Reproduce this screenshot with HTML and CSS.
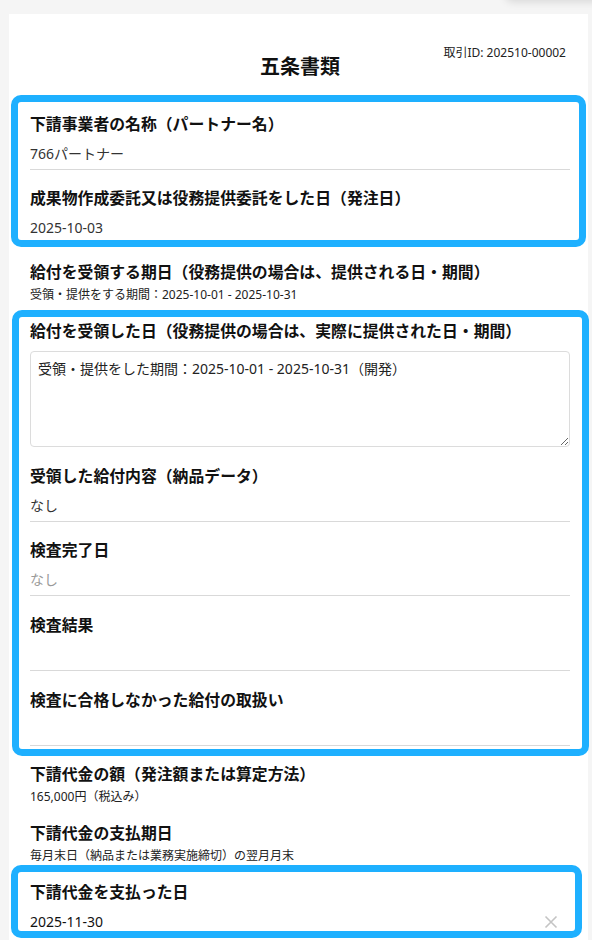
FILE: index.html
```html
<!DOCTYPE html>
<html lang="ja">
<head>
<meta charset="utf-8">
<link rel="stylesheet" href="styles.css">
</head>
<body>
<div class="shadow-blob"></div>
<main class="card">
  <header class="doc-header">
    <h1 class="doc-title">五条書類</h1>
    <div class="doc-id">取引ID: 202510-00002</div>
  </header>

  <section class="group hl hl-1">
    <div class="field">
      <div class="label">下請事業者の名称（パートナー名）</div>
      <div class="input">766パートナー</div>
    </div>
    <div class="field">
      <div class="label">成果物作成委託又は役務提供委託をした日（発注日）</div>
      <div class="input">2025-10-03</div>
    </div>
  </section>

  <section class="info">
    <div class="label">給付を受領する期日（役務提供の場合は、提供される日・期間）</div>
    <div class="sub">受領・提供をする期間：2025-10-01 - 2025-10-31</div>
  </section>

  <section class="group hl hl-2">
    <div class="field">
      <div class="label">給付を受領した日（役務提供の場合は、実際に提供された日・期間）</div>
      <textarea class="textarea" readonly>受領・提供をした期間：2025-10-01 - 2025-10-31（開発）</textarea>
    </div>
    <div class="field">
      <div class="label">受領した給付内容（納品データ）</div>
      <div class="input">なし</div>
    </div>
    <div class="field">
      <div class="label">検査完了日</div>
      <div class="input placeholder">なし</div>
    </div>
    <div class="field">
      <div class="label">検査結果</div>
      <div class="input"></div>
    </div>
    <div class="field">
      <div class="label">検査に合格しなかった給付の取扱い</div>
      <div class="input"></div>
    </div>
  </section>

  <section class="info">
    <div class="label">下請代金の額（発注額または算定方法）</div>
    <div class="sub">165,000円（税込み）</div>
  </section>

  <section class="info">
    <div class="label">下請代金の支払期日</div>
    <div class="sub">毎月末日（納品または業務実施締切）の翌月月末</div>
  </section>

  <section class="group hl hl-3">
    <div class="field">
      <div class="label">下請代金を支払った日</div>
      <div class="input date-input">
        <span>2025-11-30</span>
        <svg class="clear" width="14" height="14" viewBox="0 0 14 14"><path d="M1.5 1.5 L12.5 12.5 M12.5 1.5 L1.5 12.5" stroke="#c4c4c4" stroke-width="1.6" fill="none"/></svg>
      </div>
    </div>
  </section>
</main>
</body>
</html>
```

FILE: styles.css
```css
* { box-sizing: border-box; }
html, body { margin: 0; padding: 0; }
body {
  background: #f5f5f5;
  font-family: "Noto Sans", "Noto Sans CJK JP", sans-serif;
  color: #111;
  height: 940px;
  overflow: hidden;
  position: relative;
}
.shadow-blob {
  position: absolute;
  top: -30px;
  left: 505px;
  width: 120px;
  height: 30px;
  border-radius: 8px;
  background: #f5f5f5;
  box-shadow: 0 2px 8px rgba(0,0,0,0.12);
}
.card {
  background: #fff;
  margin: 14px 4px 0 9px;
  padding: 30px 18px 40px 21px;
  min-height: 1000px;
}
.doc-header {
  display: grid;
  grid-template-columns: 1fr auto 1fr;
  align-items: start;
}
.doc-title {
  grid-column: 2;
  grid-row: 1;
  margin: 9px 0 0;
  font-size: 20px;
  line-height: 28px;
  font-weight: 700;
  color: #111;
}
.doc-id {
  grid-column: 3;
  grid-row: 1;
  justify-self: end;
  font-size: 12px;
  line-height: 18px;
  color: #222;
  margin-right: 4px;
}
.group { position: relative; }
.hl::before {
  content: "";
  position: absolute;
  border: 7px solid #1eb0ff;
  border-radius: 10px;
  pointer-events: none;
  z-index: 2;
}
.hl-1 { margin-top: 31px; }
.hl-1::before { top: -17px; bottom: -3px; left: -19px; right: -16px; }
.hl-2::before { top: -9px; bottom: -10px; left: -18px; right: -19px; }
.hl-3::before { top: -15px; bottom: 0; left: -19px; right: -12px; }

.field { margin-bottom: 16px; }
.hl-2 .field { margin-bottom: 16.7px; }
.label {
  font-size: 15.85px;
  line-height: 24px;
  font-weight: 700;
  color: #111;
}
.input {
  margin-top: 4px;
  padding: 4px 0 5px;
  min-height: 30px;
  font-size: 14px;
  line-height: 20px;
  color: #333;
  border-bottom: 1px solid #d9d9d9;
}
.input.placeholder { color: #9a9a9a; }
.date-input {
  display: flex;
  justify-content: space-between;
  align-items: center;
  padding-right: 12px;
  color: #111;
}
.textarea {
  display: block;
  width: 100%;
  height: 96px;
  margin-top: 8px;
  padding: 7px 7px;
  border: 1px solid #dcdcdc;
  border-radius: 4px;
  font-family: "Noto Sans", "Noto Sans CJK JP", sans-serif;
  font-size: 14px;
  line-height: 20px;
  color: #222;
  resize: vertical;
  outline: none;
}
.info { margin-bottom: 15px; }
.info .sub {
  margin-top: 2px;
  font-size: 12px;
  line-height: 18px;
  color: #222;
}
```
